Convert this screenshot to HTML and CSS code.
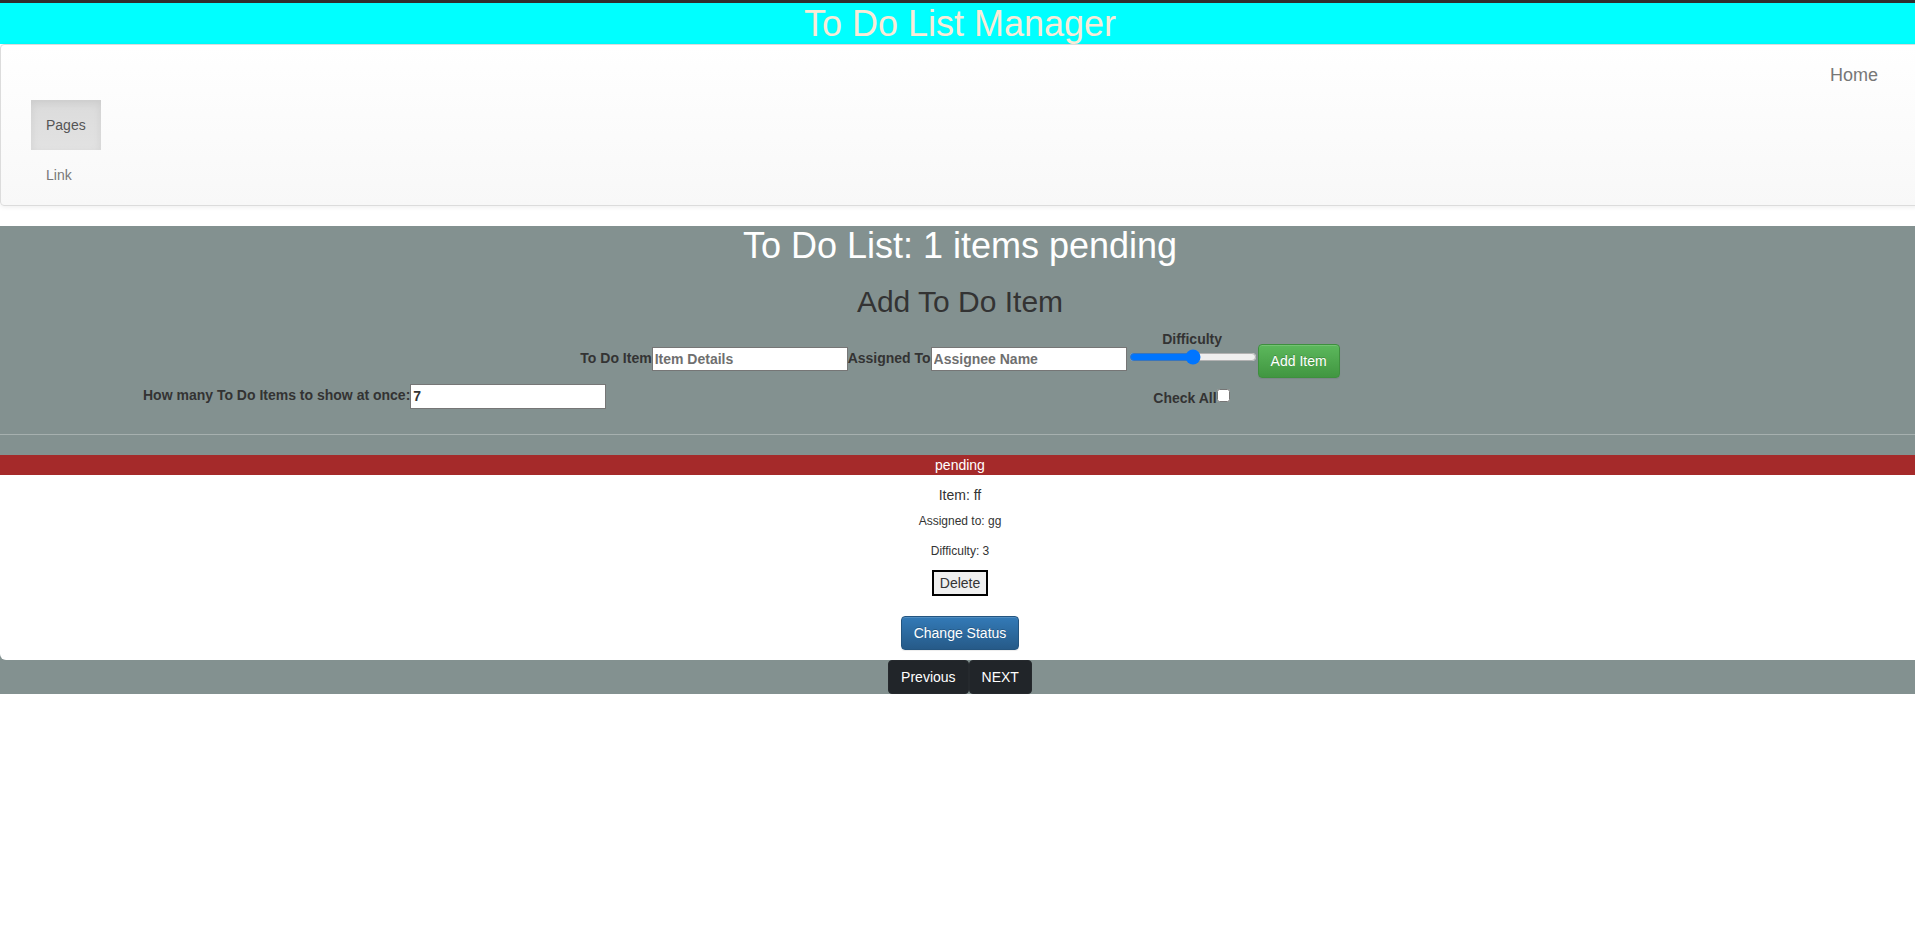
FILE: index.html
```html
<!DOCTYPE html>
<html lang="en">
<head>
<meta charset="utf-8">
<title>To Do List Manager</title>
<link rel="stylesheet" href="styles.css">
</head>
<body>
<div class="page">
  <div class="topline"></div>
  <header class="app-header">
    <h1 class="app-title">To Do List Manager</h1>
  </header>

  <nav class="navbar">
    <div class="navbar-header">
      <a class="brand" href="#">Home</a>
    </div>
    <ul class="nav">
      <li class="active"><a href="#">Pages</a></li>
      <li><a href="#">Link</a></li>
    </ul>
  </nav>

  <main class="todo">
    <h1 class="count">To Do List: 1 items pending</h1>
    <h2 class="add-title">Add To Do Item</h2>

    <form class="add-row">
      <label class="field"><span>To Do Item</span><input type="text" placeholder="Item Details"></label>
      <label class="field"><span>Assigned To</span><input type="text" placeholder="Assignee Name"></label>
      <label class="difficulty"><span>Difficulty</span><input type="range" min="1" max="5" value="3"></label>
      <button type="button" class="btn btn-success">Add Item</button>
    </form>

    <div class="options-row">
      <label class="field show-count"><span>How many To Do Items to show at once:</span><input type="text" value="7"></label>
      <label class="check-all">Check All<input type="checkbox"></label>
    </div>

    <hr class="divider">

    <section class="card">
      <div class="card-header">pending</div>
      <div class="card-body">
        <p class="item">Item: ff</p>
        <p class="meta meta-assigned">Assigned to: gg</p>
        <p class="meta meta-difficulty">Difficulty: 3</p>
        <div class="delete-wrap"><button type="button" class="delete">Delete</button></div>
        <div class="status-wrap"><button type="button" class="btn btn-primary">Change Status</button></div>
      </div>
    </section>

    <div class="pager">
      <button type="button" class="btn-dark">Previous</button>
      <button type="button" class="btn-dark">NEXT</button>
    </div>
  </main>
</div>
</body>
</html>
```

FILE: styles.css
```css
html, body {
  overflow-x: hidden;
}

body {
  margin: 0;
  background: #fff;
  font-family: "Liberation Sans", Arial, Helvetica, sans-serif;
  font-size: 14px;
  line-height: 1.42857;
  color: #333;
}

.page {
  width: 1920px;
}

button, input {
  font: inherit;
  color: inherit;
  margin: 0;
}

/* top strip + title */
.topline {
  height: 3px;
  background: #2f2f2f;
}

.app-header {
  background: #00ffff;
  height: 41px;
}

.app-title {
  margin: 0;
  font-size: 36px;
  line-height: 41px;
  font-weight: normal;
  text-align: center;
  color: #faebd7;
}

/* navbar */
.navbar {
  margin-bottom: 20px;
  padding: 5px 26px 5px 30px;
  border: 1px solid #dcdcdc;
  border-radius: 4px;
  background: linear-gradient(to bottom, #ffffff 0%, #f8f8f8 100%);
  box-shadow: inset 0 1px 0 rgba(255, 255, 255, .15), 0 1px 5px rgba(0, 0, 0, .075);
}

.navbar-header {
  display: flex;
  justify-content: flex-end;
}

.brand {
  display: block;
  padding: 15px;
  height: 20px;
  font-size: 18px;
  line-height: 20px;
  color: #777;
  text-decoration: none;
}

.nav {
  list-style: none;
  margin: 0;
  padding: 0;
}

.nav li {
  display: flex;
}

.nav a {
  display: block;
  padding: 15px;
  line-height: 20px;
  color: #777;
  text-decoration: none;
}

.nav .active a {
  color: #555;
  background: linear-gradient(to bottom, #dbdbdb 0%, #e2e2e2 100%);
  box-shadow: inset 0 3px 9px rgba(0, 0, 0, .075);
}

/* main grey section */
.todo {
  background: #839190;
  display: flow-root;
}

.count {
  margin: 0 0 10px;
  font-size: 36px;
  line-height: 1.1;
  font-weight: normal;
  text-align: center;
  color: #fff;
}

.add-title {
  margin: 19px 0 11px;
  font-size: 30px;
  line-height: 1.1;
  font-weight: normal;
  text-align: center;
  color: #333;
}

.add-row {
  display: flex;
  justify-content: center;
  align-items: flex-start;
  margin: 0;
}

.field {
  display: flex;
  align-items: center;
  font-weight: bold;
}

.add-row .field {
  margin-top: 18px;
}

.field input {
  box-sizing: border-box;
  width: 196px;
  height: 24px;
  padding: 1px 2px;
  border: 1px solid #767676;
  border-radius: 0;
  background: #fff;
  font-weight: bold;
  line-height: 20px;
  color: #333;
}

.show-count input {
  height: 25px;
}

.field input::placeholder {
  color: #6f6f6f;
}

.difficulty {
  display: flex;
  flex-direction: column;
  align-items: center;
  font-weight: bold;
}

.difficulty span {
  line-height: 20px;
}

.difficulty input {
  width: 128px;
  height: 16px;
  margin: 0 1px 0 2px;
}

.btn {
  display: inline-block;
  padding: 6px 12px;
  border: 1px solid transparent;
  border-radius: 4px;
  font-size: 14px;
  line-height: 20px;
  color: #fff;
  text-shadow: 0 -1px 0 rgba(0, 0, 0, .2);
  box-shadow: inset 0 1px 0 rgba(255, 255, 255, .15), 0 1px 1px rgba(0, 0, 0, .075);
  cursor: pointer;
}

.btn-success {
  margin-top: 15px;
  background: linear-gradient(to bottom, #5cb85c 0%, #419641 100%);
  border-color: #3e8f3e;
}

.btn-primary {
  background: linear-gradient(to bottom, #337ab7 0%, #265a88 100%);
  border-color: #245580;
}

.options-row {
  display: flex;
  align-items: center;
  margin-top: 6px;
}

.show-count {
  margin-left: 143px;
}

.check-all {
  display: inline-block;
  margin-left: 547px;
  font-weight: bold;
  line-height: 20px;
}

.check-all input {
  width: 13px;
  height: 13px;
  margin: 4px 0 0;
  vertical-align: 1px;
}

.divider {
  margin: 25px 0 20px;
  height: 0;
  border: 0;
  border-top: 1px solid #a6b0af;
}

/* card */
.card-header {
  height: 20px;
  line-height: 20px;
  background: #a52a2a;
  color: #fff;
  text-align: center;
}

.card-body {
  background: #fff;
  padding: 10px 0;
  text-align: center;
  border-radius: 0 0 6px 6px;
}

.item {
  margin: 0;
  line-height: 20px;
}

.meta {
  font-size: 12px;
  line-height: 17px;
}

.meta-assigned {
  margin: 8px 0 0;
}

.meta-difficulty {
  margin: 13px 0 0;
}

.delete-wrap {
  display: flex;
  justify-content: center;
  margin-top: 10px;
}

.delete {
  padding: 1px 6px;
  border: 2px solid #000;
  background: #efefef;
  line-height: 20px;
  color: #333;
}

.status-wrap {
  display: flex;
  justify-content: center;
  margin-top: 20px;
}

/* pager */
.pager {
  display: flex;
  justify-content: center;
}

.btn-dark {
  padding: 6px 12px;
  border: 1px solid #25292d;
  border-radius: 4px;
  background: #212529;
  color: #fff;
  font-size: 14px;
  line-height: 20px;
}
```
